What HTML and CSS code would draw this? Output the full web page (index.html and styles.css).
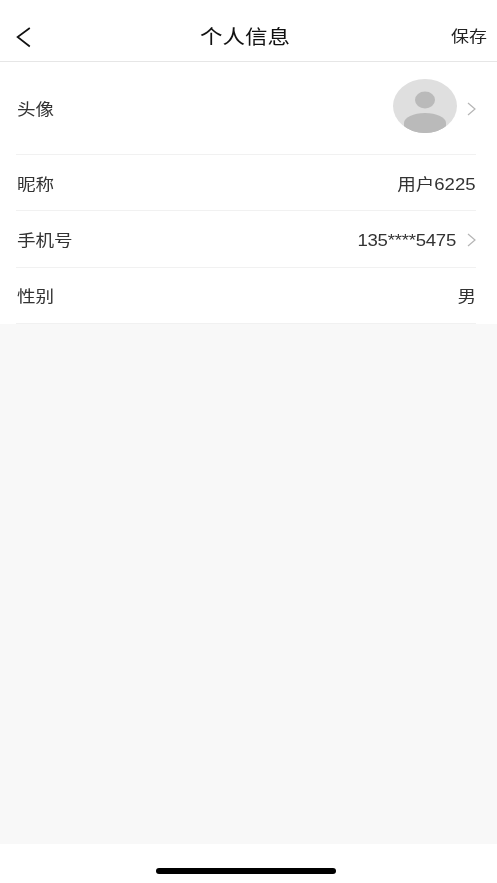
FILE: index.html
```html
<!DOCTYPE html>
<html lang="zh">
<head>
<meta charset="utf-8">
<title>个人信息</title>
<link rel="stylesheet" href="styles.css">
</head>
<body>
<div class="page">
  <header class="nav">
    <svg class="back" viewBox="0 0 16 21" width="16" height="21"><path d="M13.8 1 L1.6 10 L13.8 19.5" fill="none" stroke="#111" stroke-width="1.7"/></svg>
    <h1 class="title">个人信息</h1>
    <span class="save">保存</span>
  </header>
  <section class="list">
    <div class="row row-avatar">
      <span class="label">头像</span>
      <div class="right">
        <svg class="avatar" viewBox="0 0 64 54" width="64" height="54">
          <defs><clipPath id="c"><ellipse cx="32" cy="27" rx="32" ry="27"/></clipPath></defs>
          <ellipse cx="32" cy="27" rx="32" ry="27" fill="#dfdfdf"/>
          <ellipse cx="32" cy="21" rx="10" ry="8.5" fill="#bababa"/>
          <g clip-path="url(#c)"><ellipse cx="32" cy="44" rx="21" ry="10" fill="#bababa"/><rect x="11" y="44" width="42" height="10" fill="#bababa"/></g>
        </svg>
        <svg class="chev" viewBox="0 0 9 14" width="9" height="14"><path d="M1 1 L8 7 L1 13" fill="none" stroke="#b5b5b5" stroke-width="1.2"/></svg>
      </div>
    </div>
    <div class="row">
      <span class="label">昵称</span>
      <div class="right"><span class="value">用户6225</span></div>
    </div>
    <div class="row">
      <span class="label">手机号</span>
      <div class="right">
        <span class="value value-phone">135****5475</span>
        <svg class="chev" viewBox="0 0 9 14" width="9" height="14"><path d="M1 1 L8 7 L1 13" fill="none" stroke="#b5b5b5" stroke-width="1.2"/></svg>
      </div>
    </div>
    <div class="row">
      <span class="label">性别</span>
      <div class="right"><span class="value">男</span></div>
    </div>
  </section>
  <main class="blank"></main>
  <footer class="home"><div class="bar"></div></footer>
</div>
</body>
</html>
```
FILE: styles.css
```css
* { box-sizing: border-box; }
html, body { margin: 0; padding: 0; background: #fff; }
body { font-family: "Liberation Sans", "Noto Sans CJK SC", sans-serif; }
.page { width: 497px; height: 883px; display: flex; flex-direction: column; overflow: hidden; }
.nav { height: 62px; padding: 14px 10px 0 16px; display: flex; align-items: center; justify-content: space-between; border-bottom: 1px solid #e6e6e6; position: relative; flex: none; }
.back { display: block; margin-top: -1px; }
.title { position: absolute; left: 0; right: 7px; top: 24px; margin: 0; text-align: center; font-size: 19.5px; line-height: 26px; font-weight: 400; color: #111; transform: scaleX(1.155); filter: blur(0.3px); }
.save { font-size: 15.5px; line-height: 24px; color: #222; transform: scaleX(1.16); transform-origin: right center; margin-top: -2px; filter: blur(0.3px); }
.list { padding: 0 21px 0 17px; flex: none; }
.row { height: 56.33px; padding: 4px 0 0 1px; margin-left: -1px; display: flex; align-items: center; justify-content: space-between; border-bottom: 1px solid #f1f1f1; }
.row-avatar { height: 93px; }
.label { font-size: 16px; line-height: 24px; color: #333; transform: scaleX(1.16); transform-origin: left center; filter: blur(0.3px); }
.right { display: flex; align-items: center; }
.value { font-size: 16px; line-height: 24px; color: #333; transform: scaleX(1.16); transform-origin: right center; filter: blur(0.3px); }
.value-phone { margin-right: 11px; letter-spacing: -0.2px; }
.avatar { display: block; margin-right: 10px; margin-bottom: 8px; }
.chev { display: block; margin-top: -2px; }
.blank { flex: 1; background: #f8f8f8; }
.home { height: 39px; flex: none; background: #fff; display: flex; justify-content: center; padding: 24px 6px 0 0; }
.bar { width: 180px; height: 6px; border-radius: 3px; background: #000; }
```
